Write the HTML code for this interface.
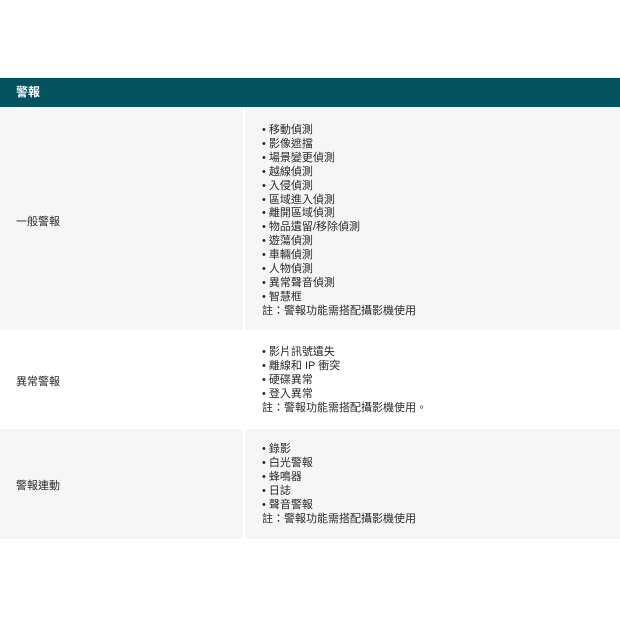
<!DOCTYPE html>
<html><head><meta charset="utf-8"><style>
body{margin:0;background:#fff;font-family:"Liberation Sans","Noto Sans CJK TC",sans-serif;font-size:11px;color:#2a2a2a;}
.hd{position:absolute;left:0;top:78px;width:620px;height:29px;background:#02535f;color:#fff;font-weight:bold;font-size:12px;line-height:29px;}
.hd span{margin-left:16px}
.row{position:absolute;left:0;width:620px;}
.l{position:absolute;left:16px;}
.r{position:absolute;left:262px;line-height:13.9px;white-space:nowrap;}
.div{position:absolute;left:243px;top:0;bottom:0;width:2px;background:#fff;}
</style></head><body>
<div class="hd"><span>警報</span></div>
<div class="row" style="top:107px;height:223px;background:#f6f6f6">
<div class="div"></div>
<div class="l" style="top:106px">一般警報</div>
<div class="r" style="top:17px">• 移動偵測<br>• 影像遮擋<br>• 場景變更偵測<br>• 越線偵測<br>• 入侵偵測<br>• 區域進入偵測<br>• 離開區域偵測<br>• 物品遺留/移除偵測<br>• 遊蕩偵測<br>• 車輛偵測<br>• 人物偵測<br>• 異常聲音偵測<br>• 智慧框<br>註：警報功能需搭配攝影機使用</div>
</div>
<div class="row" style="top:330px;height:99px;background:#fff">
<div class="l" style="top:43px">異常警報</div>
<div class="r" style="top:16px">• 影片訊號遺失<br>• 離線和 IP 衝突<br>• 硬碟異常<br>• 登入異常<br>註：警報功能需搭配攝影機使用。</div>
</div>
<div class="row" style="top:429px;height:110px;background:#f6f6f6">
<div class="div"></div>
<div class="l" style="top:48px">警報連動</div>
<div class="r" style="top:14px">• 錄影<br>• 白光警報<br>• 蜂鳴器<br>• 日誌<br>• 聲音警報<br>註：警報功能需搭配攝影機使用</div>
</div>
</body></html>
